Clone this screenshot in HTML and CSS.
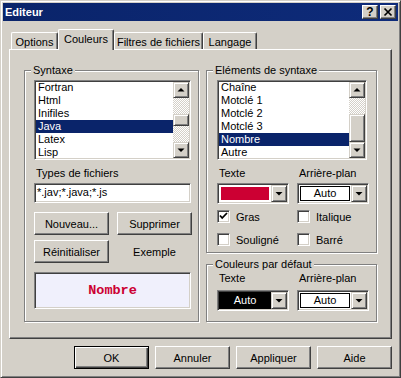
FILE: index.html
```html
<!DOCTYPE html>
<html lang="fr">

<head>
    <meta charset="UTF-8">
    <title>Editeur</title>
    <link rel="stylesheet" href="styles.css">
</head>

<body>
    <div class="window">
        <div class="titlebar">
            <span class="title">Editeur</span>
            <div class="caption-buttons">
                <span class="cap-btn help">?</span>
                <span class="cap-btn">
                    <svg width="14" height="12" viewBox="0 0 14 12">
                        <path d="M3.5 2.5 L10.5 9.5 M10.5 2.5 L3.5 9.5" stroke="#000" stroke-width="1.7" fill="none" />
                    </svg>
                </span>
            </div>
        </div>

        <div class="content">
            <div class="tabs">
                <div class="tab tab-options">Options</div>
                <div class="tab tab-couleurs active">Couleurs</div>
                <div class="tab tab-filtres">Filtres de fichiers</div>
                <div class="tab tab-langage">Langage</div>
            </div>

            <div class="panel">
                <fieldset class="group group-syntax">
                    <legend>Syntaxe</legend>
                    <div class="group-body syntax-body">
                        <div class="listbox">
                            <ul class="items">
                                <li>Fortran</li>
                                <li>Html</li>
                                <li>Inifiles</li>
                                <li class="selected">Java</li>
                                <li>Latex</li>
                                <li>Lisp</li>
                            </ul>
                            <div class="scrollbar">
                                <div class="sb-btn">
                                    <svg width="14" height="14" viewBox="0 0 14 14"><polygon points="3.5,8.5 10.5,8.5 7,5" fill="#000" /></svg>
                                </div>
                                <div class="sb-track"></div>
                                <div class="sb-thumb thumb-small"></div>
                                <div class="sb-track"></div>
                                <div class="sb-btn">
                                    <svg width="14" height="14" viewBox="0 0 14 14"><polygon points="3.5,5.5 10.5,5.5 7,9" fill="#000" /></svg>
                                </div>
                            </div>
                        </div>

                        <div class="field-label">Types de fichiers</div>
                        <div class="textbox">*.jav;*.java;*.js</div>

                        <div class="btn-grid">
                            <button class="btn">Nouveau...</button>
                            <button class="btn">Supprimer</button>
                            <button class="btn">Réinitialiser</button>
                            <span class="exemple">Exemple</span>
                        </div>

                        <div class="preview">Nombre</div>
                    </div>
                </fieldset>

                <div class="right-col">
                    <fieldset class="group group-elements">
                        <legend>Eléments de syntaxe</legend>
                        <div class="group-body elements-body">
                            <div class="listbox listbox-elements">
                                <ul class="items">
                                    <li>Chaîne</li>
                                    <li>Motclé 1</li>
                                    <li>Motclé 2</li>
                                    <li>Motclé 3</li>
                                    <li class="selected">Nombre</li>
                                    <li>Autre</li>
                                </ul>
                                <div class="scrollbar">
                                    <div class="sb-btn">
                                        <svg width="14" height="14" viewBox="0 0 14 14"><polygon points="3.5,8.5 10.5,8.5 7,5" fill="#000" /></svg>
                                    </div>
                                    <div class="sb-track"></div>
                                    <div class="sb-thumb thumb-large"></div>
                                    <div class="sb-btn">
                                        <svg width="14" height="14" viewBox="0 0 14 14"><polygon points="3.5,5.5 10.5,5.5 7,9" fill="#000" /></svg>
                                    </div>
                                </div>
                            </div>

                            <div class="color-grid">
                                <div class="field-label">Texte</div>
                                <div class="field-label">Arrière-plan</div>
                                <div class="combo">
                                    <div class="swatch swatch-red"></div>
                                    <div class="drop">
                                        <svg width="14" height="15" viewBox="0 0 14 15"><polygon points="3.5,6 10.5,6 7,9.5" fill="#000" /></svg>
                                    </div>
                                </div>
                                <div class="combo">
                                    <div class="swatch swatch-auto">Auto</div>
                                    <div class="drop">
                                        <svg width="14" height="15" viewBox="0 0 14 15"><polygon points="3.5,6 10.5,6 7,9.5" fill="#000" /></svg>
                                    </div>
                                </div>
                            </div>

                            <div class="checks">
                                <div class="check">
                                    <span class="box">
                                        <svg width="11" height="11" viewBox="0 0 11 11"><polyline points="2,4.5 4.2,7 9,2" stroke="#000" stroke-width="1.8" fill="none" /></svg>
                                    </span>
                                    Gras
                                </div>
                                <div class="check"><span class="box"></span>Italique</div>
                                <div class="check"><span class="box"></span>Souligné</div>
                                <div class="check"><span class="box"></span>Barré</div>
                            </div>
                        </div>
                    </fieldset>

                    <fieldset class="group group-defaults">
                        <legend>Couleurs par défaut</legend>
                        <div class="group-body defaults-body">
                            <div class="color-grid">
                                <div class="field-label">Texte</div>
                                <div class="field-label">Arrière-plan</div>
                                <div class="combo">
                                    <div class="swatch swatch-black">Auto</div>
                                    <div class="drop">
                                        <svg width="14" height="15" viewBox="0 0 14 15"><polygon points="3.5,6 10.5,6 7,9.5" fill="#000" /></svg>
                                    </div>
                                </div>
                                <div class="combo">
                                    <div class="swatch swatch-auto">Auto</div>
                                    <div class="drop">
                                        <svg width="14" height="15" viewBox="0 0 14 15"><polygon points="3.5,6 10.5,6 7,9.5" fill="#000" /></svg>
                                    </div>
                                </div>
                            </div>
                        </div>
                    </fieldset>
                </div>
            </div>

            <div class="footer">
                <button class="btn btn-default">OK</button>
                <button class="btn">Annuler</button>
                <button class="btn">Appliquer</button>
                <button class="btn">Aide</button>
            </div>
        </div>
    </div>
</body>

</html>
```

FILE: styles.css
```css
* {
    box-sizing: border-box;
}

body {
    margin: 0;
    background-color: #d4d0c8;
    font-family: "Liberation Sans", Arial, sans-serif;
    font-size: 11px;
    color: #000;
}

.window {
    width: 401px;
    height: 378px;
    padding: 2px;
    background-color: #d4d0c8;
    border: 1px solid;
    border-color: #d4d0c8 #404040 #404040 #d4d0c8;
    box-shadow: inset 1px 1px #fff, inset -1px -1px #808080;
}

/* title bar */
.titlebar {
    display: flex;
    height: 18px;
    padding-left: 2px;
    background: linear-gradient(90deg, #0a246a, #0e2b7a);
    color: #fff;
}

.title {
    font-weight: bold;
    line-height: 18px;
}

.caption-buttons {
    display: flex;
    gap: 2px;
    margin: 2px 2px 0 auto;
}

.cap-btn {
    display: flex;
    align-items: center;
    justify-content: center;
    width: 16px;
    height: 14px;
    background-color: #d4d0c8;
    border: 1px solid;
    border-color: #fff #404040 #404040 #fff;
    box-shadow: inset -1px -1px #808080;
    color: #000;
}

.help {
    font-weight: bold;
    font-size: 12px;
    line-height: 12px;
}

/* tabs */
.content {
    padding: 8px 6px 0 6px;
}

.tabs {
    display: flex;
    align-items: flex-end;
    height: 20px;
    padding-left: 2px;
}

.tab {
    height: 17px;
    padding-top: 3px;
    line-height: 12px;
    text-align: center;
    white-space: nowrap;
    border: 1px solid;
    border-bottom: none;
    border-color: #fff #404040 #fff #fff;
    border-radius: 2px 2px 0 0;
    box-shadow: inset -1px 0 #808080;
}

.tab-options {
    width: 47px;
}

.tab-couleurs {
    width: 56px;
}

.tab-filtres {
    width: 89px;
}

.tab-langage {
    width: 54px;
}

.tab.active {
    position: relative;
    z-index: 1;
    height: 21px;
    margin-bottom: -1px;
    background-color: #d4d0c8;
}

.panel {
    display: flex;
    align-items: flex-start;
    gap: 7px;
    height: 290px;
    padding: 14px 0 0 14px;
    border: 1px solid;
    border-color: #fff #404040 #404040 #fff;
    box-shadow: inset -1px -1px #808080;
}

/* group boxes */
.group {
    margin: 0;
    padding: 0;
    min-width: 0;
    border: 1px solid #808080;
    box-shadow: inset 1px 1px #fff, 1px 1px #fff;
}

.group legend {
    margin-left: 6px;
    padding: 0 2px;
    line-height: 13px;
    background-color: #d4d0c8;
}

.group-syntax {
    width: 175px;
}

.syntax-body {
    padding: 3px 6px 12px 9px;
}

.right-col {
    display: flex;
    flex-direction: column;
    gap: 5px;
    width: 171px;
}

.elements-body {
    padding: 3px 9px 6px 10px;
}

.defaults-body {
    padding: 1px 9px 10px 10px;
}

/* list boxes */
.listbox {
    display: flex;
    width: 157px;
    height: 80px;
    padding: 1px;
    background-color: #fff;
    border: 1px solid;
    border-color: #808080 #fff #fff #808080;
    box-shadow: inset 1px 1px #404040, inset -1px -1px #d4d0c8;
}

.listbox-elements {
    width: 150px;
}

.items {
    flex: 1;
    margin: -1px 0 0 0;
    padding: 0;
    list-style: none;
    overflow: hidden;
}

.items li {
    height: 13px;
    padding-left: 2px;
    line-height: 13px;
    white-space: nowrap;
}

.items li.selected {
    background-color: #0a246a;
    color: #fff;
}

.scrollbar {
    display: flex;
    flex-direction: column;
    width: 16px;
}

.sb-btn,
.sb-thumb {
    flex: none;
    background-color: #d4d0c8;
    border: 1px solid;
    border-color: #d4d0c8 #404040 #404040 #d4d0c8;
    box-shadow: inset 1px 1px #fff, inset -1px -1px #808080;
}

.sb-btn {
    height: 16px;
}

.sb-btn svg {
    display: block;
}

.sb-track {
    flex: 1;
    background: repeating-conic-gradient(#fff 0 25%, #d4d0c8 0 50%) 0 0 / 2px 2px;
}

.thumb-small {
    height: 12px;
}

.thumb-large {
    height: 28px;
}

/* fields */
.field-label {
    margin-top: 7px;
    padding-left: 2px;
    line-height: 13px;
    white-space: nowrap;
}

.textbox {
    width: 157px;
    height: 20px;
    margin-top: 3px;
    padding: 0 2px;
    line-height: 17px;
    background-color: #fff;
    border: 1px solid;
    border-color: #808080 #fff #fff #808080;
    box-shadow: inset 1px 1px #404040, inset -1px -1px #d4d0c8;
}

.btn-grid {
    display: grid;
    grid-template-columns: 75px 75px;
    column-gap: 8px;
    row-gap: 5px;
    margin-top: 9px;
}

.btn {
    height: 23px;
    padding: 0;
    font-family: inherit;
    font-size: 11px;
    color: #000;
    background-color: #d4d0c8;
    border: 1px solid;
    border-color: #fff #404040 #404040 #fff;
    box-shadow: inset -1px -1px #808080;
}

.btn-default {
    border-color: #000;
    box-shadow: inset 1px 1px #fff, inset -1px -1px #404040, inset -2px -2px #808080;
}

.exemple {
    align-self: center;
    text-align: center;
}

.preview {
    display: flex;
    align-items: center;
    justify-content: center;
    width: 157px;
    height: 37px;
    margin-top: 9px;
    font-family: "Liberation Mono", "Courier New", monospace;
    font-weight: bold;
    font-size: 13.5px;
    color: #cc0033;
    background-color: #f0f0fc;
    border: 1px solid;
    border-color: #808080 #fff #fff #808080;
    box-shadow: inset 1px 1px #404040, inset -1px -1px #d4d0c8;
}

/* colour combos */
.color-grid {
    display: grid;
    grid-template-columns: 72px 72px;
    column-gap: 8px;
}

.defaults-body .field-label {
    margin-top: 0;
}

.combo {
    display: flex;
    height: 21px;
    margin-top: 3px;
    padding: 1px;
    background-color: #fff;
    border: 1px solid;
    border-color: #808080 #fff #fff #808080;
    box-shadow: inset 1px 1px #404040, inset -1px -1px #d4d0c8;
}

.defaults-body .combo {
    margin-top: 5px;
}

.swatch {
    flex: 1;
    text-align: center;
}

.swatch-red {
    margin: 2px;
    background-color: #cc0033;
}

.swatch-auto {
    margin: 1px;
    line-height: 13px;
    border: 1px solid #000;
}

.swatch-black {
    line-height: 17px;
    background-color: #000;
    color: #fff;
}

.drop {
    flex: none;
    width: 16px;
    background-color: #d4d0c8;
    border: 1px solid;
    border-color: #d4d0c8 #404040 #404040 #d4d0c8;
    box-shadow: inset 1px 1px #fff, inset -1px -1px #808080;
}

.drop svg {
    display: block;
}

/* check boxes */
.checks {
    display: grid;
    grid-template-columns: 72px 72px;
    column-gap: 8px;
    row-gap: 10px;
    margin-top: 6px;
}

.check {
    display: flex;
    align-items: center;
    gap: 6px;
    height: 13px;
    white-space: nowrap;
}

.box {
    flex: none;
    width: 13px;
    height: 13px;
    background-color: #fff;
    border: 1px solid;
    border-color: #808080 #fff #fff #808080;
    box-shadow: inset 1px 1px #404040, inset -1px -1px #d4d0c8;
}

.box svg {
    display: block;
}

/* dialog buttons */
.footer {
    display: flex;
    justify-content: flex-end;
    gap: 6px;
    margin-top: 7px;
}

.footer .btn {
    width: 75px;
}
```
